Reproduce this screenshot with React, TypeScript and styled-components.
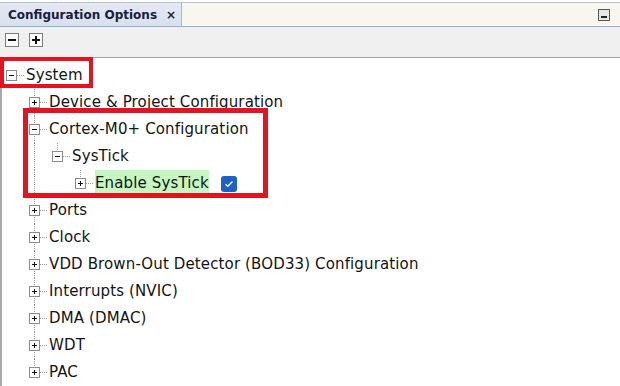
import React from 'react';
import styled, { createGlobalStyle } from 'styled-components';

const Global = createGlobalStyle`
  html, body { margin: 0; padding: 0; background: #ffffff; }
  body { font-family: "DejaVu Sans", Verdana, sans-serif; }
`;

const Panel = styled.div`
  position: relative;
  width: 620px;
  height: 386px;
  overflow: hidden;
  display: flex;
  flex-direction: column;
  background: #ffffff;
`;

const TabBar = styled.div`
  height: 23px;
  margin-top: 2px;
  border-top: 1px solid #b7c3d0;
  border-bottom: 1px solid #93b3d3;
  background: #f7f7f0;
  display: flex;
  align-items: stretch;
`;

const Tab = styled.div`
  width: 173px;
  padding-left: 8px;
  display: flex;
  align-items: center;
  background: linear-gradient(#e4e9f4, #d9e0ee);
  border-right: 1px solid #a9b7c9;
  font-size: 12px;
  font-weight: bold;
  color: #17203c;
  white-space: nowrap;
`;

const TabClose = styled.span`
  margin-left: 9px;
  font-size: 12px;
  font-weight: bold;
  color: #222;
`;

const MinButton = styled.div`
  margin: 6px 10px 0 auto;
  width: 12px;
  height: 12px;
  box-sizing: border-box;
  border: 1px solid #555;
  background: #e6e6e6;
  display: flex;
  align-items: flex-end;
  justify-content: center;
  padding-bottom: 2px;
`;

const MinBar = styled.div`
  width: 6px;
  height: 2px;
  background: #222;
`;

const Toolbar = styled.div`
  height: 30px;
  box-sizing: border-box;
  background: #f0f0f0;
  display: flex;
  align-items: flex-start;
  gap: 10px;
  padding: 6px 0 0 5px;
`;

const ToolButton = styled.div`
  width: 14px;
  height: 14px;
  box-sizing: border-box;
  border: 1px solid #7d7d7d;
  background: #fafafa;
  display: flex;
  align-items: center;
  justify-content: center;
`;

const TreeArea = styled.div`
  flex: 1;
  border-top: 1px solid #a3a3a3;
  border-left: 2px solid #a8a8a8;
  padding-top: 4px;
  display: flex;
  flex-direction: column;
`;

const Row = styled.div`
  height: 27px;
  display: flex;
  align-items: stretch;
`;

type LineKind = 'none' | 'full' | 'half';

const vLine = (kind: LineKind) =>
  kind === 'none'
    ? 'none'
    : `repeating-linear-gradient(to bottom, #9a9a9a 0 1px, transparent 1px 2px)`;

const Gutter = styled.div<{ $line: LineKind }>`
  width: 23px;
  flex: none;
  background-image: ${(p) => vLine(p.$line)};
  background-size: 1px ${(p) => (p.$line === 'half' ? '50%' : '100%')};
  background-position: 9px 0;
  background-repeat: no-repeat;
`;

const Expander = styled.div<{ $line: LineKind }>`
  width: 23px;
  flex: none;
  box-sizing: border-box;
  padding-left: 4px;
  display: flex;
  align-items: center;
  background-image: repeating-linear-gradient(to right, #9a9a9a 0 1px, transparent 1px 2px)
    ${(p) => (p.$line === 'none' ? '' : `, ${vLine(p.$line)}`)};
  background-size: 14px 1px ${(p) => (p.$line === 'none' ? '' : p.$line === 'half' ? ', 1px 50%' : ', 1px 100%')};
  background-position: 9px 50% ${(p) => (p.$line === 'none' ? '' : ', 9px 0')};
  background-repeat: no-repeat;
`;

const ToggleBox = styled.div`
  width: 11px;
  height: 11px;
  box-sizing: border-box;
  border: 1px solid #8c8c8c;
  background: #ffffff;
  display: flex;
  align-items: center;
  justify-content: center;
`;

const Label = styled.span<{ $highlight?: boolean }>`
  margin-left: 1px;
  font-size: 15px;
  letter-spacing: 0.13px;
  line-height: 27px;
  color: #141414;
  white-space: nowrap;
  background: ${(p) => (p.$highlight ? '#c6f6c1' : 'transparent')};
`;

const CheckBox = styled.div`
  margin: 6px 0 0 12px;
  width: 16px;
  height: 16px;
  border-radius: 3px;
  background: #1b62c4;
  display: flex;
  align-items: center;
  justify-content: center;
`;

const Callout = styled.div<{ $x: number; $y: number; $w: number; $h: number; $t: number }>`
  position: absolute;
  left: ${(p) => p.$x}px;
  top: ${(p) => p.$y}px;
  width: ${(p) => p.$w}px;
  height: ${(p) => p.$h}px;
  box-sizing: border-box;
  border: ${(p) => p.$t}px solid #e3141f;
  pointer-events: none;
`;

const Glyph = ({ plus, size = 7, weight = 1 }: { plus: boolean; size?: number; weight?: number }) => (
  <svg width={size} height={size} viewBox={`0 0 ${size} ${size}`} style={{ display: 'block' }}>
    <rect x={0} y={(size - weight) / 2} width={size} height={weight} fill="#111" />
    {plus && <rect x={(size - weight) / 2} y={0} width={weight} height={size} fill="#111" />}
  </svg>
);

type Node = {
  label: string;
  gutters: LineKind[];
  line: LineKind;
  expanded: boolean;
  highlight?: boolean;
  checkbox?: boolean;
};

const nodes: Node[] = [
  { label: 'System', gutters: [], line: 'none', expanded: true },
  { label: 'Device & Project Configuration', gutters: ['none'], line: 'full', expanded: false },
  { label: 'Cortex-M0+ Configuration', gutters: ['none'], line: 'full', expanded: true },
  { label: 'SysTick', gutters: ['none', 'full'], line: 'half', expanded: true },
  { label: 'Enable SysTick', gutters: ['none', 'full', 'none'], line: 'half', expanded: false, highlight: true, checkbox: true },
  { label: 'Ports', gutters: ['none'], line: 'full', expanded: false },
  { label: 'Clock', gutters: ['none'], line: 'full', expanded: false },
  { label: 'VDD Brown-Out Detector (BOD33) Configuration', gutters: ['none'], line: 'full', expanded: false },
  { label: 'Interrupts (NVIC)', gutters: ['none'], line: 'full', expanded: false },
  { label: 'DMA (DMAC)', gutters: ['none'], line: 'full', expanded: false },
  { label: 'WDT', gutters: ['none'], line: 'full', expanded: false },
  { label: 'PAC', gutters: ['none'], line: 'half', expanded: false },
];

export default function App() {
  return (
    <>
      <Global />
      <Panel>
        <TabBar>
          <Tab>
            Configuration Options
            <TabClose>×</TabClose>
          </Tab>
          <MinButton>
            <MinBar />
          </MinButton>
        </TabBar>
        <Toolbar>
          <ToolButton>
            <Glyph plus={false} size={8} weight={2} />
          </ToolButton>
          <ToolButton>
            <Glyph plus size={8} weight={2} />
          </ToolButton>
        </Toolbar>
        <TreeArea>
          {nodes.map((n) => (
            <Row key={n.label}>
              {n.gutters.map((g, i) => (
                <Gutter key={i} $line={g} />
              ))}
              <Expander $line={n.line}>
                <ToggleBox>
                  <Glyph plus={!n.expanded} size={5} />
                </ToggleBox>
              </Expander>
              <Label $highlight={n.highlight}>{n.label}</Label>
              {n.checkbox && (
                <CheckBox>
                  <svg width="10" height="8" viewBox="0 0 10 8">
                    <path d="M1.5 4.2 L3.8 6.3 L8.5 1.6" fill="none" stroke="#fff" strokeWidth="1.4" />
                  </svg>
                </CheckBox>
              )}
            </Row>
          ))}
        </TreeArea>
        <Callout $x={0} $y={57} $w={93} $h={31} $t={4} />
        <Callout $x={23} $y={108} $w={245} $h={90} $t={5} />
      </Panel>
    </>
  );
}
